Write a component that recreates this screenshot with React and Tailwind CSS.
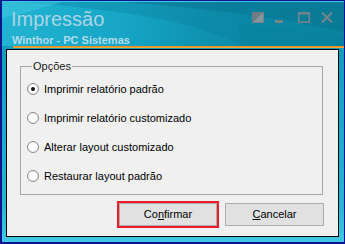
import React from "react";

const options = [
  { label: "Imprimir relatório padrão", checked: true },
  { label: "Imprimir relatório customizado" },
  { label: "Alterar layout customizado" },
  { label: "Restaurar layout padrão" },
];

const Radio = ({ checked }) => (
  <span className="flex h-[12px] w-[12px] shrink-0 items-center justify-center rounded-full border border-[#8c8c8c] bg-[radial-gradient(circle,#ffffff_40%,#e2e2e2_100%)]">
    {checked && <span className="h-[4px] w-[4px] rounded-full bg-[#141414]" />}
  </span>
);

const WindowControls = () => (
  <div className="mt-[4px] flex gap-[11px]">
    <svg width="12" height="12" viewBox="0 0 12 12">
      <rect x="0.5" y="0.5" width="11" height="10" fill="#8797a0" stroke="#76858c" />
      <polygon points="0,0 12,0 0,11" fill="#6f7d84" />
    </svg>
    <svg width="12" height="12" viewBox="0 0 12 12">
      <rect x="0" y="8" width="8" height="3" fill="#76858c" />
    </svg>
    <svg width="12" height="12" viewBox="0 0 12 12">
      <rect x="0.75" y="0.75" width="10.5" height="9.5" fill="none" stroke="#76858c" strokeWidth="1.5" />
      <rect x="0" y="0" width="12" height="2.5" fill="#76858c" />
    </svg>
    <svg width="12" height="12" viewBox="0 0 12 12">
      <path d="M1 0.5 L11 10.5 M11 0.5 L1 10.5" stroke="#76858c" strokeWidth="2" />
    </svg>
  </div>
);

export default function App() {
  return (
    <div className="h-[244px] w-[345px] overflow-hidden border-t border-r border-b-2 border-l-2 border-[#0c1492] font-['Liberation_Sans',Arial,sans-serif]">
      <div className="flex h-full flex-col border-t border-[#3cc6e0] bg-[linear-gradient(180deg,#0e93b2_0%,#16a6c6_40%,#26b6d4_85%,#3fc8e2_100%)]">
        {/* title bar */}
        <div className="relative h-[44px] overflow-visible bg-[linear-gradient(100deg,#22b4d2_0%,#17a6c6_35%,#0e90ae_62%,#0a86a3_100%)]">
          <svg className="absolute inset-0" width="343" height="44" viewBox="0 0 343 44">
            <path d="M20 0 C120 8 200 20 240 44 L343 44 L343 0 Z" fill="#0a7f9b" opacity="0.35" />
            <path d="M120 0 C200 6 270 14 343 30 L343 0 Z" fill="#06708b" opacity="0.45" />
            <path d="M0 0 L60 0 C40 6 20 12 0 16 Z" fill="#4fd0e6" opacity="0.35" />
            <path d="M236 22 L240 44 L343 44 L343 34 Z" fill="#08809c" opacity="0.4" />
          </svg>
          <div className="relative flex justify-between pt-[6px] pr-[11px] pl-[9px]">
            <div className="flex flex-col">
              <span className="text-[20px] leading-[23px] text-[#a9d4e6]">Impressão</span>
              <span className="mt-[4px] ml-[1px] text-[11px] font-bold leading-[10px] text-[#b2dbeb]">
                Winthor - PC Sistemas
              </span>
            </div>
            <WindowControls />
          </div>
        </div>
        <div className="ml-[11px] h-[2px] bg-[linear-gradient(180deg,#e8861a,#f4b040)]" />
        <div className="h-[1px]" />

        {/* dialog body */}
        <div className="mr-[5px] mb-[5px] ml-[4px] flex flex-1 flex-col border border-black bg-[#f0f0f0] text-[11px] text-black">
          <fieldset className="mt-[10px] mr-[15px] ml-[13px] h-[135px] border border-[#a6a6a6] px-[6px]">
            <legend className="ml-[5px] px-[1px] leading-[13px] text-[#1a1a1a]">Opções</legend>
            <div className="flex flex-col gap-[9px] pt-[6px]">
              {options.map((o) => (
                <label key={o.label} className="flex h-[20px] items-center gap-[5px]">
                  <Radio checked={o.checked} />
                  <span>{o.label}</span>
                </label>
              ))}
            </div>
          </fieldset>
          <div className="mt-[8px] mr-[14px] flex justify-end gap-[8px]">
            <button className="h-[23px] w-[98px] border border-[#adadad] bg-[#e1e1e1] outline-2 outline-[#ee1c24] outline-solid">
              Co<span className="underline">n</span>firmar
            </button>
            <button className="h-[23px] w-[99px] border border-[#adadad] bg-[#e1e1e1]">
              <span className="underline">C</span>ancelar
            </button>
          </div>
        </div>
      </div>
    </div>
  );
}
